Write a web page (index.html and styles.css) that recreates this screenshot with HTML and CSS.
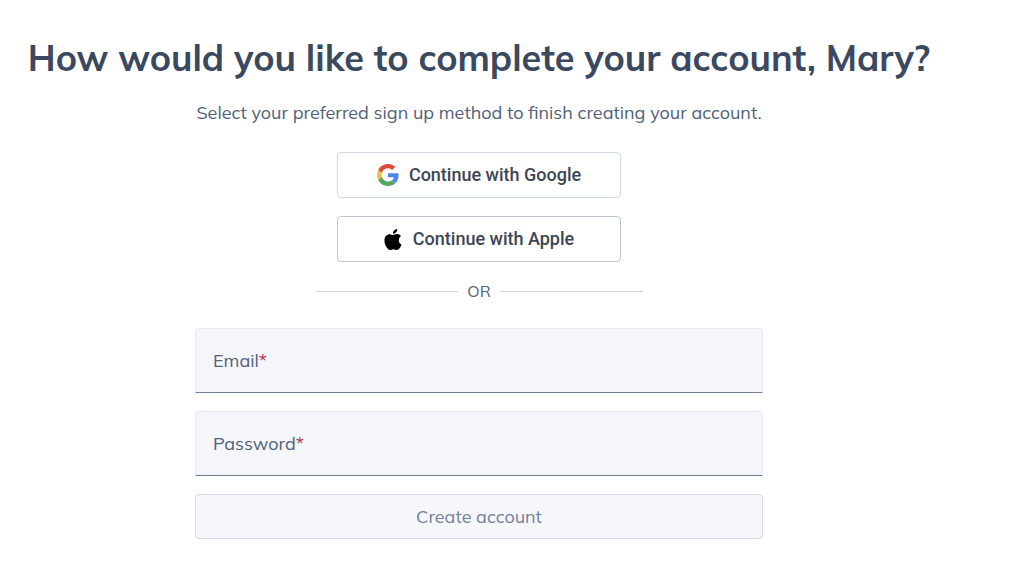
FILE: index.html
```html
<!DOCTYPE html>
<html lang="en">
<head>
    <meta charset="UTF-8">
    <meta name="viewport" content="width=device-width, initial-scale=1">
    <title>Complete your account</title>
    <link rel="stylesheet" href="styles.css">
</head>
<body>
    <main class="signup">
        <h1 class="title">How would you like to complete your account, Mary?</h1>
        <p class="subtitle">Select your preferred sign up method to finish creating your account.</p>

        <div class="providers">
            <button type="button" class="provider-btn">
                <svg class="google-icon" viewBox="0 0 48 48" aria-hidden="true">
                    <path fill="#de4b3e" d="M24 9.5c3.54 0 6.71 1.22 9.21 3.6l6.85-6.85C35.9 2.38 30.47 0 24 0 14.62 0 6.51 5.38 2.56 13.22l7.98 6.19C12.43 13.72 17.74 9.5 24 9.5z"/>
                    <path fill="#4f86ec" d="M46.98 24.55c0-1.57-.15-3.09-.38-4.55H24v9.02h12.94c-.58 2.96-2.26 5.48-4.78 7.18l7.73 6c4.51-4.18 7.09-10.36 7.09-17.65z"/>
                    <path fill="#f2be42" d="M10.53 28.59c-.48-1.45-.76-2.99-.76-4.59s.27-3.14.76-4.59l-7.98-6.19C.92 16.46 0 20.12 0 24c0 3.88.92 7.54 2.56 10.78l7.97-6.19z"/>
                    <path fill="#58a55c" d="M24 48c6.48 0 11.93-2.13 15.89-5.81l-7.73-6c-2.15 1.45-4.92 2.3-8.16 2.3-6.26 0-11.57-4.22-13.47-9.91l-7.98 6.19C6.51 42.62 14.62 48 24 48z"/>
                </svg>
                Continue with Google
            </button>
            <button type="button" class="provider-btn apple">
                <svg class="apple-icon" viewBox="0 0 814 1000" aria-hidden="true">
                    <path d="M788.1 340.9c-5.8 4.5-108.2 62.2-108.2 190.5 0 148.4 130.3 200.9 134.2 202.2-.6 3.2-20.7 71.9-68.7 141.9-42.8 61.6-87.5 123.1-155.5 123.1s-85.5-39.5-164-39.5c-76.5 0-103.7 40.8-165.9 40.8s-105.6-57-155.5-127C46.7 790.7 0 663 0 541.8c0-194.4 126.4-297.5 250.8-297.5 66.1 0 121.2 43.4 162.7 43.4 39.5 0 101.1-46 176.3-46 28.5 0 130.9 2.6 198.3 99.2zm-234-181.5c31.1-36.9 53.1-88.1 53.1-139.3 0-7.1-.6-14.3-1.9-20.1-50.6 1.9-110.8 33.7-147.1 75.8-28.5 32.4-55.1 83.6-55.1 135.5 0 7.8 1.3 15.6 1.9 18.1 3.2.6 8.4 1.3 13.6 1.3 45.4 0 102.5-30.4 135.5-71.3z"/>
                </svg>
                Continue with Apple
            </button>
        </div>

        <div class="divider">OR</div>

        <form class="signup-form">
            <div class="field">
                <input type="email" id="email" name="email" required>
                <label for="email">Email<span class="required">*</span></label>
            </div>
            <div class="field">
                <input type="password" id="password" name="password" required>
                <label for="password">Password<span class="required">*</span></label>
            </div>
            <button type="submit" class="submit-btn" disabled>Create account</button>
        </form>
    </main>
</body>
</html>
```
FILE: styles.css
```css
* {
    box-sizing: border-box;
}

body {
    margin: 0;
    background: #fff;
    color: #52617a;
    font-family: Mulish, Muli, Lato, sans-serif;
    font-size: 18px;
}

button,
input {
    font: inherit;
}

.signup {
    display: flex;
    flex-direction: column;
    align-items: center;
    padding: 34px 66px 46px 0;
}

.title {
    margin: 0;
    color: #3b4960;
    font-size: 36px;
    font-weight: 700;
    line-height: 48px;
    text-align: center;
}

.subtitle {
    margin: 19px 0 0;
    line-height: 24px;
    text-align: center;
}

.providers {
    display: flex;
    flex-direction: column;
    gap: 18px;
    width: 50%;
    max-width: 284px;
    min-width: 240px;
    margin-top: 27px;
}

.provider-btn {
    display: flex;
    align-items: center;
    justify-content: center;
    gap: 10px;
    padding: 11px;
    background: #fff;
    border: 1px solid #cfdae8;
    border-radius: 4px;
    color: #3c4654;
    font-family: Roboto, sans-serif;
    font-weight: 500;
    line-height: 22px;
    cursor: pointer;
}

.provider-btn.apple {
    border-color: #bcc7d8;
}

.google-icon {
    width: 22px;
    height: 22px;
}

.apple-icon {
    width: 18px;
    height: 21px;
    margin-right: 1px;
}

.divider {
    display: flex;
    align-items: center;
    gap: 9px;
    width: 100%;
    max-width: 327px;
    margin-top: 18px;
    font-size: 16px;
    line-height: 22px;
}

.divider::before,
.divider::after {
    content: "";
    flex: 1;
    height: 1px;
    background: #cdd6e3;
}

.signup-form {
    display: flex;
    flex-direction: column;
    gap: 18px;
    width: 100%;
    max-width: 568px;
    margin-top: 26px;
}

.field {
    position: relative;
}

.field input {
    display: block;
    width: 100%;
    height: 65px;
    padding: 0 17px;
    background: #f5f6fb;
    border: 1px solid #e6eaf2;
    border-bottom-color: #6f7e95;
    border-radius: 4px 4px 0 0;
    color: #3b4960;
    outline: none;
}

/* label sits over the empty input */
.field label {
    position: absolute;
    top: 0;
    bottom: 0;
    left: 18px;
    display: flex;
    align-items: center;
    pointer-events: none;
}

.required {
    color: #b8324a;
}

.submit-btn {
    height: 45px;
    padding: 0 16px;
    background: #f6f7fa;
    border: 1px solid #d3dbe7;
    border-radius: 4px;
    color: #75819a;
}
```
